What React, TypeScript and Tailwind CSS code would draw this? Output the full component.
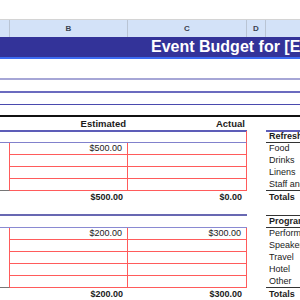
const grid = "grid grid-cols-[10px_118px_119px_19px_34px]";
const red = "border-[#ff5b5b]";

function Line({ h, border }: { h: string; border: string }) {
  return <div className={`${h} ${border} w-full`} />;
}

function DataRow({ est, act, label, last }: { est?: string; act?: string; label?: string; last?: boolean }) {
  return (
    <div className={`${grid} h-[12px] leading-[11px] text-[9px]`}>
      <div className={`border-r ${red} ${last ? "border-b border-b-[#777]" : ""}`} />
      <div className={`border-r border-b ${red} text-right pr-[5px]`}>{est}</div>
      <div className={`border-r border-b ${red} text-right pr-[5px]`}>{act}</div>
      <div />
      <div className={`pl-[3px] whitespace-nowrap ${last ? "border-b border-[#333]" : ""}`}>{label}</div>
    </div>
  );
}

function TotalsRow({ est, act }: { est: string; act: string }) {
  return (
    <div className={`${grid} h-[12px] leading-[12px] text-[9px] font-bold`}>
      <div />
      <div className="text-right pr-[5px]">{est}</div>
      <div className="text-right pr-[5px]">{act}</div>
      <div />
      <div className="pl-[3px]">Totals</div>
    </div>
  );
}

export default function App() {
  return (
    <div className="w-[300px] h-[300px] overflow-hidden bg-white text-[#1b1b1b] font-['Liberation_Sans',Arial,sans-serif]">
      {/* window top */}
      <Line h="h-[20px]" border="border-b border-[#d4d4d4]" />

      {/* column letters */}
      <div className={`${grid} h-[17px] bg-[#d3e2f8] text-[8px] font-bold text-[#3a4250] leading-[17px] text-center`}>
        <div className="border-r border-[#b9c4d4]" />
        <div className="border-r border-[#b9c4d4]">B</div>
        <div className="border-r border-[#b9c4d4]">C</div>
        <div className="border-r border-[#b9c4d4]">D</div>
        <div />
      </div>

      {/* title */}
      <div className="h-[22px] bg-[#333399] border-b-2 border-[#3d6cf2] pl-[151px] text-white font-bold text-[16px] leading-[20px] whitespace-nowrap overflow-hidden">
        Event Budget for [Event Name]
      </div>

      <Line h="h-[21px]" border="border-b-2 border-[#a6a6d6]" />
      <Line h="h-[13px]" border="border-b-2 border-[#6b6bbf]" />
      <Line h="h-[12px]" border="border-b-[1.5px] border-[#4a4aae]" />
      <Line h="h-[12px]" border="border-b-2 border-[#111]" />

      {/* column titles */}
      <div className={`${grid} h-[14px] text-[9.5px] font-bold leading-[13px]`}>
        <div className="border-b-2 border-[#5d5db8]" />
        <div className="border-b-2 border-[#5d5db8] text-right pr-[2px]">Estimated</div>
        <div className="border-b-2 border-[#5d5db8] text-right pr-[2px]">Actual</div>
        <div />
        <div className="border-b-2 border-[#5d5db8]" />
      </div>

      {/* refreshments */}
      <div className={`${grid} h-[12px] text-[9px] font-bold leading-[11px]`}>
        <div className="border-b border-[#8181cc]" />
        <div className="border-b border-[#8181cc]" />
        <div className="border-b border-[#8181cc] border-r border-r-[#ff5b5b]" />
        <div />
        <div className="border-b border-[#333] pl-[3px] whitespace-nowrap">Refreshments</div>
      </div>
      <DataRow est="$500.00" label="Food" />
      <DataRow label="Drinks" />
      <DataRow label="Linens" />
      <DataRow label="Staff and Services" last />
      <TotalsRow est="$500.00" act="$0.00" />

      {/* program */}
      <div className={`${grid} h-[13px]`}>
        <div className="border-b-2 border-[#6868b2]" />
        <div className="border-b-2 border-[#6868b2]" />
        <div className="border-b-2 border-[#6868b2]" />
        <div />
        <div className="border-b border-[#333]" />
      </div>
      <div className={`${grid} h-[12px] text-[9px] font-bold leading-[11px]`}>
        <div className="border-b border-[#8a8ad2]" />
        <div className="border-b border-[#8a8ad2]" />
        <div className="border-b border-[#8a8ad2]" />
        <div />
        <div className="border-b border-[#333] pl-[3px] whitespace-nowrap">Program</div>
      </div>
      <DataRow est="$200.00" act="$300.00" label="Performers" />
      <DataRow label="Speakers" />
      <DataRow label="Travel" />
      <DataRow label="Hotel" />
      <DataRow label="Other" last />
      <TotalsRow est="$200.00" act="$300.00" />
    </div>
  );
}
